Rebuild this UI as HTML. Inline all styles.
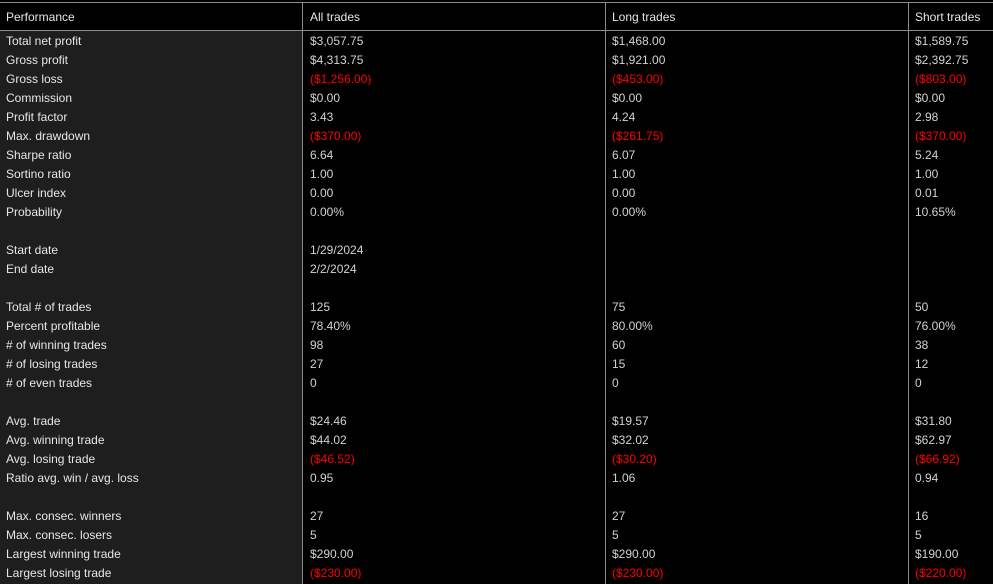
<!DOCTYPE html><html><head><style>
body{margin:0;width:993px;height:584px;background:#000;overflow:hidden;font-family:"Liberation Sans",Arial,sans-serif;font-size:12px;position:relative}
.c0{position:absolute;left:0;top:31px;width:302px;height:553px;background:#1e1e1e}
.h{position:absolute;left:0;width:993px;height:1px;background:#8c8c8c}
.v{position:absolute;top:2px;width:1px;height:582px;background:#8c8c8c}
.t{position:absolute;white-space:nowrap;color:#d2d2d2;line-height:19px}
.l{color:#e6e6e6}
.r{color:#f00}
</style></head><body>
<div class="c0"></div>
<div class="h" style="top:2px"></div>
<div class="h" style="top:30px"></div>
<div class="v" style="left:302px"></div>
<div class="v" style="left:605px"></div>
<div class="v" style="left:908px"></div>
<div class="t l" style="left:6px;top:8px">Performance</div>
<div class="t l" style="left:310px;top:8px">All trades</div>
<div class="t l" style="left:612px;top:8px">Long trades</div>
<div class="t l" style="left:915px;top:8px">Short trades</div>
<div id="rows"></div>
<script>
var d=[
["Total net profit","$3,057.75","$1,468.00","$1,589.75"],
["Gross profit","$4,313.75","$1,921.00","$2,392.75"],
["Gross loss","($1,256.00)","($453.00)","($803.00)"],
["Commission","$0.00","$0.00","$0.00"],
["Profit factor","3.43","4.24","2.98"],
["Max. drawdown","($370.00)","($261.75)","($370.00)"],
["Sharpe ratio","6.64","6.07","5.24"],
["Sortino ratio","1.00","1.00","1.00"],
["Ulcer index","0.00","0.00","0.01"],
["Probability","0.00%","0.00%","10.65%"],
null,
["Start date","1/29/2024","",""],
["End date","2/2/2024","",""],
null,
["Total # of trades","125","75","50"],
["Percent profitable","78.40%","80.00%","76.00%"],
["# of winning trades","98","60","38"],
["# of losing trades","27","15","12"],
["# of even trades","0","0","0"],
null,
["Avg. trade","$24.46","$19.57","$31.80"],
["Avg. winning trade","$44.02","$32.02","$62.97"],
["Avg. losing trade","($46.52)","($30.20)","($66.92)"],
["Ratio avg. win / avg. loss","0.95","1.06","0.94"],
null,
["Max. consec. winners","27","27","16"],
["Max. consec. losers","5","5","5"],
["Largest winning trade","$290.00","$290.00","$190.00"],
["Largest losing trade","($230.00)","($230.00)","($220.00)"]];
var xs=[6,310,612,915],h="";
d.forEach(function(r,i){if(!r)return;var y=32+i*19;r.forEach(function(s,j){if(!s)return;var c=j==0?"t l":(s[0]=="("?"t r":"t");h+='<div class="'+c+'" style="left:'+xs[j]+'px;top:'+y+'px">'+s+'</div>';});});
document.getElementById("rows").innerHTML=h;
</script>
</body></html>
